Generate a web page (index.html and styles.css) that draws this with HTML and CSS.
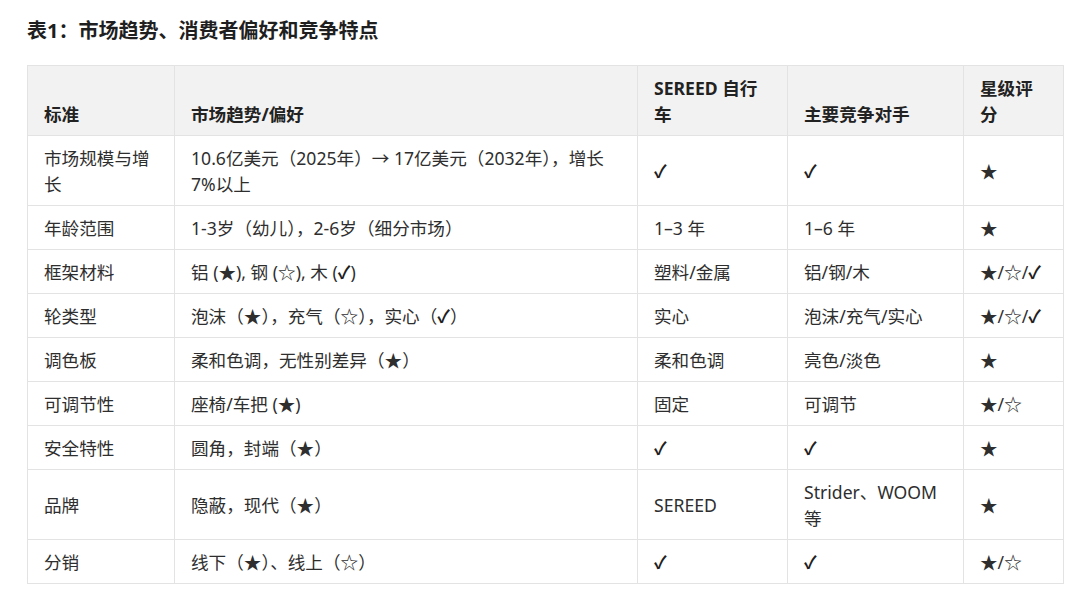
FILE: index.html
```html
<!DOCTYPE html>
<html lang="zh-CN">
<head>
<meta charset="utf-8">
<title>表1</title>
<link rel="stylesheet" href="styles.css">
</head>
<body>
<div class="page">
  <h1 class="title">表1：市场趋势、消费者偏好和竞争特点</h1>
  <table class="grid">
    <colgroup>
      <col class="c1"><col class="c2"><col class="c3"><col class="c4"><col class="c5">
    </colgroup>
    <thead>
      <tr><th>标准</th><th>市场趋势/偏好</th><th>SEREED 自行车</th><th>主要竞争对手</th><th>星级评分</th></tr>
    </thead>
    <tbody>
      <tr><td>市场规模与增长</td><td>10.6亿美元（2025年）→ 17亿美元（2032年），增长7%以上</td><td><span class="chk">✓</span></td><td><span class="chk">✓</span></td><td>★</td></tr>
      <tr><td>年龄范围</td><td>1-3岁（幼儿），2-6岁（细分市场）</td><td>1–3 年</td><td>1–6 年</td><td>★</td></tr>
      <tr><td>框架材料</td><td>铝 (★), 钢 (☆), 木 (<span class="chk">✓</span>)</td><td>塑料/金属</td><td>铝/钢/木</td><td>★/☆/<span class="chk">✓</span></td></tr>
      <tr><td>轮类型</td><td>泡沫（★），充气（☆），实心（<span class="chk">✓</span>）</td><td>实心</td><td>泡沫/充气/实心</td><td>★/☆/<span class="chk">✓</span></td></tr>
      <tr><td>调色板</td><td>柔和色调，无性别差异（★）</td><td>柔和色调</td><td>亮色/淡色</td><td>★</td></tr>
      <tr><td>可调节性</td><td>座椅/车把 (★)</td><td>固定</td><td>可调节</td><td>★/☆</td></tr>
      <tr><td>安全特性</td><td>圆角，封端（★）</td><td><span class="chk">✓</span></td><td><span class="chk">✓</span></td><td>★</td></tr>
      <tr><td>品牌</td><td>隐蔽，现代（★）</td><td>SEREED</td><td>Strider、WOOM 等</td><td>★</td></tr>
      <tr><td>分销</td><td>线下（★）、线上（☆）</td><td><span class="chk">✓</span></td><td><span class="chk">✓</span></td><td>★/☆</td></tr>
    </tbody>
  </table>
</div>
</body>
</html>
```

FILE: styles.css
```css
html, body {
  margin: 0;
  padding: 0;
  background: #ffffff;
}

body {
  font-family: "Noto Sans", "Noto Sans CJK SC", "DejaVu Sans", sans-serif;
  color: #2e2e2e;
}

.page {
  padding: 16px 17px 0 27px;
}

.title {
  margin: 0 0 19px 0;
  font-size: 20px;
  line-height: 30px;
  font-weight: 700;
  color: #1f1f1f;
}

.grid {
  width: 1036px;
  border-collapse: collapse;
  table-layout: fixed;
  font-size: 17.6px;
  line-height: 26px;
}

.c1 { width: 147px; }
.c2 { width: 463px; }
.c3 { width: 150px; }
.c4 { width: 176px; }
.c5 { width: 100px; }

.grid th,
.grid td {
  border: 1px solid #e3e3e3;
  padding: 8.5px 16px;
  text-align: left;
}

.grid th {
  background: #f2f2f2;
  font-weight: 700;
  color: #222222;
  vertical-align: bottom;
}

.grid td {
  vertical-align: middle;
  font-weight: 400;
}

.chk {
  font-weight: 700;
  color: #1f1f1f;
}
```
